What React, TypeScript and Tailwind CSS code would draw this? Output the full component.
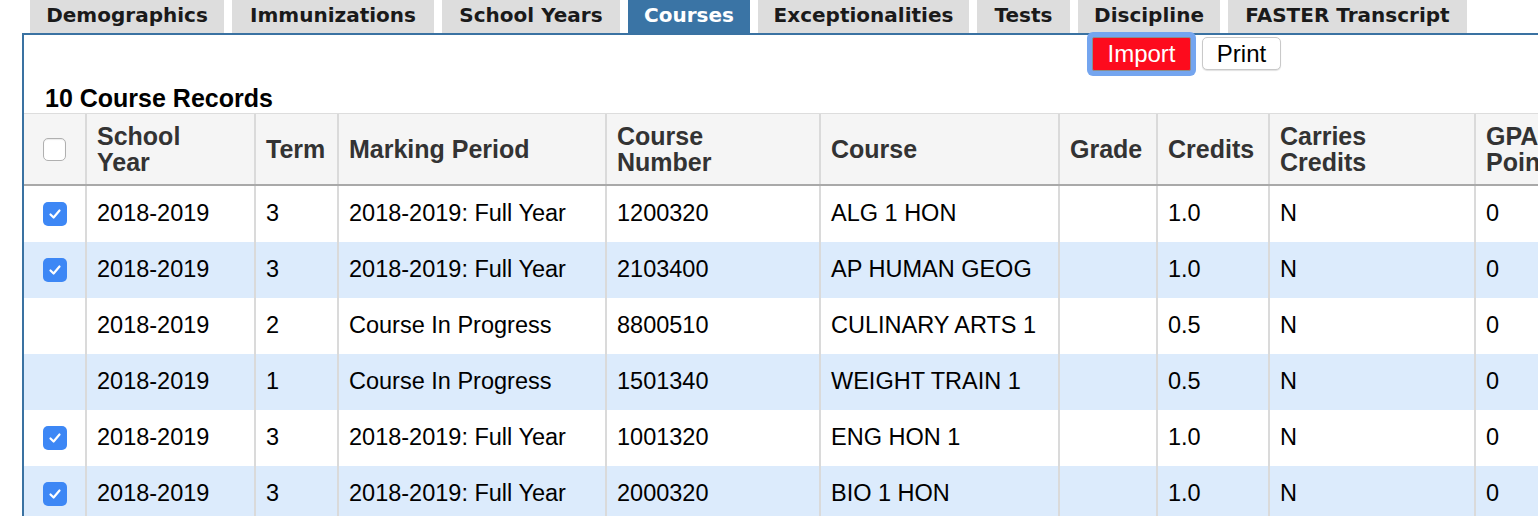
import { Fragment } from 'react'

const tabs = [
  { label: 'Demographics', w: 'w-[194px]' },
  { label: 'Immunizations', w: 'w-[202px]' },
  { label: 'School Years', w: 'w-[178px]' },
  { label: 'Courses', w: 'w-[122px]', active: true },
  { label: 'Exceptionalities', w: 'w-[211px]' },
  { label: 'Tests', w: 'w-[93px]' },
  { label: 'Discipline', w: 'w-[142px]' },
  { label: 'FASTER Transcript', w: 'w-[239px]' },
]

const headers = [
  ['School', 'Year'],
  ['Term'],
  ['Marking Period'],
  ['Course', 'Number'],
  ['Course'],
  ['Grade'],
  ['Credits'],
  ['Carries', 'Credits'],
  ['GPA', 'Points'],
]

const rows = [
  { checked: true, cells: ['2018-2019', '3', '2018-2019: Full Year', '1200320', 'ALG 1 HON', '', '1.0', 'N', '0'] },
  { checked: true, cells: ['2018-2019', '3', '2018-2019: Full Year', '2103400', 'AP HUMAN GEOG', '', '1.0', 'N', '0'] },
  { checked: false, cells: ['2018-2019', '2', 'Course In Progress', '8800510', 'CULINARY ARTS 1', '', '0.5', 'N', '0'] },
  { checked: false, cells: ['2018-2019', '1', 'Course In Progress', '1501340', 'WEIGHT TRAIN 1', '', '0.5', 'N', '0'] },
  { checked: true, cells: ['2018-2019', '3', '2018-2019: Full Year', '1001320', 'ENG HON 1', '', '1.0', 'N', '0'] },
  { checked: true, cells: ['2018-2019', '3', '2018-2019: Full Year', '2000320', 'BIO 1 HON', '', '1.0', 'N', '0'] },
]

const cols = 'grid grid-cols-[63px_169px_83px_268px_214px_239px_98px_112px_206px_200px]'

function CheckedBox() {
  return (
    <span className="w-[24px] h-[24px] rounded-[5px] bg-[#3d87f5] flex items-center justify-center">
      <svg width="16" height="16" viewBox="0 0 16 16" fill="none">
        <path d="M3.5 8.5 L6.6 11.5 L12.5 4.5" stroke="white" strokeWidth="2.2" strokeLinecap="round" strokeLinejoin="round" />
      </svg>
    </span>
  )
}

export default function App() {
  return (
    <div className="w-[1538px] h-[516px] overflow-hidden bg-white font-['Liberation_Sans',Arial,sans-serif]">
      {/* tab strip */}
      <div className="flex gap-[8px] pl-[30px] h-[33px]">
        {tabs.map((t) => (
          <div
            key={t.label}
            className={`${t.w} h-full flex items-center justify-center pb-[3px] font-['DejaVu_Sans',Verdana,sans-serif] font-bold text-[20px] ${
              t.active ? 'bg-[#3a74a5] text-white' : 'bg-[#dddddd] text-[#1a1a1a]'
            }`}
          >
            {t.label}
          </div>
        ))}
      </div>

      {/* panel */}
      <div className="ml-[22px] w-[1700px] border-t-2 border-l-2 border-[#3a72a2]">
        <div className="h-[49px] flex items-start gap-[11px] pl-[1068px] pt-[2px]">
          <button className="w-[99px] h-[34px] bg-[#fd0b1d] border border-[#8c8c8c] text-white text-[24px] leading-none ring-[5px] ring-[#74a5ef] rounded-[2px]">
            Import
          </button>
          <button className="w-[79px] h-[33px] bg-white border border-[#c9c9c9] rounded-[5px] text-black text-[24px] leading-none shadow-[0_1px_1px_rgba(0,0,0,0.12)]">
            Print
          </button>
        </div>

        <div className="h-[28px] pl-[21px] text-[25px] leading-[28px] font-bold text-black">10 Course Records</div>

        {/* table */}
        <div className="mt-[1px]">
          <div className={`${cols} h-[73px] bg-[#f5f5f5] border-t border-b-2 border-t-[#dddddd] border-b-[#a9a9a9]`}>
            <div className="border-r-2 border-[#dadada] flex items-center justify-center">
              <span className="w-[23px] h-[23px] rounded-[5px] bg-white border border-[#b0b0b0] shadow-[inset_0_1px_1px_rgba(0,0,0,0.08)]" />
            </div>
            {headers.map((h, i) => (
              <div
                key={i}
                className="border-r-2 border-[#dadada] flex flex-col justify-center pl-[10px] text-[25px] leading-[26px] font-bold text-[#333333] whitespace-nowrap"
              >
                {h.map((line) => (
                  <Fragment key={line}>
                    <span>{line}</span>
                  </Fragment>
                ))}
              </div>
            ))}
          </div>

          {rows.map((r, ri) => (
            <div key={ri} className={`${cols} h-[56px] ${ri % 2 === 1 ? 'bg-[#dcebfc]' : 'bg-white'}`}>
              <div className="border-r-2 border-[#dadada] flex items-center justify-center">
                {r.checked && <CheckedBox />}
              </div>
              {r.cells.map((c, ci) => (
                <div
                  key={ci}
                  className="border-r-2 border-[#dadada] flex items-center pl-[10px] text-[23.5px] text-black whitespace-nowrap"
                >
                  {c}
                </div>
              ))}
            </div>
          ))}
        </div>
      </div>
    </div>
  )
}
